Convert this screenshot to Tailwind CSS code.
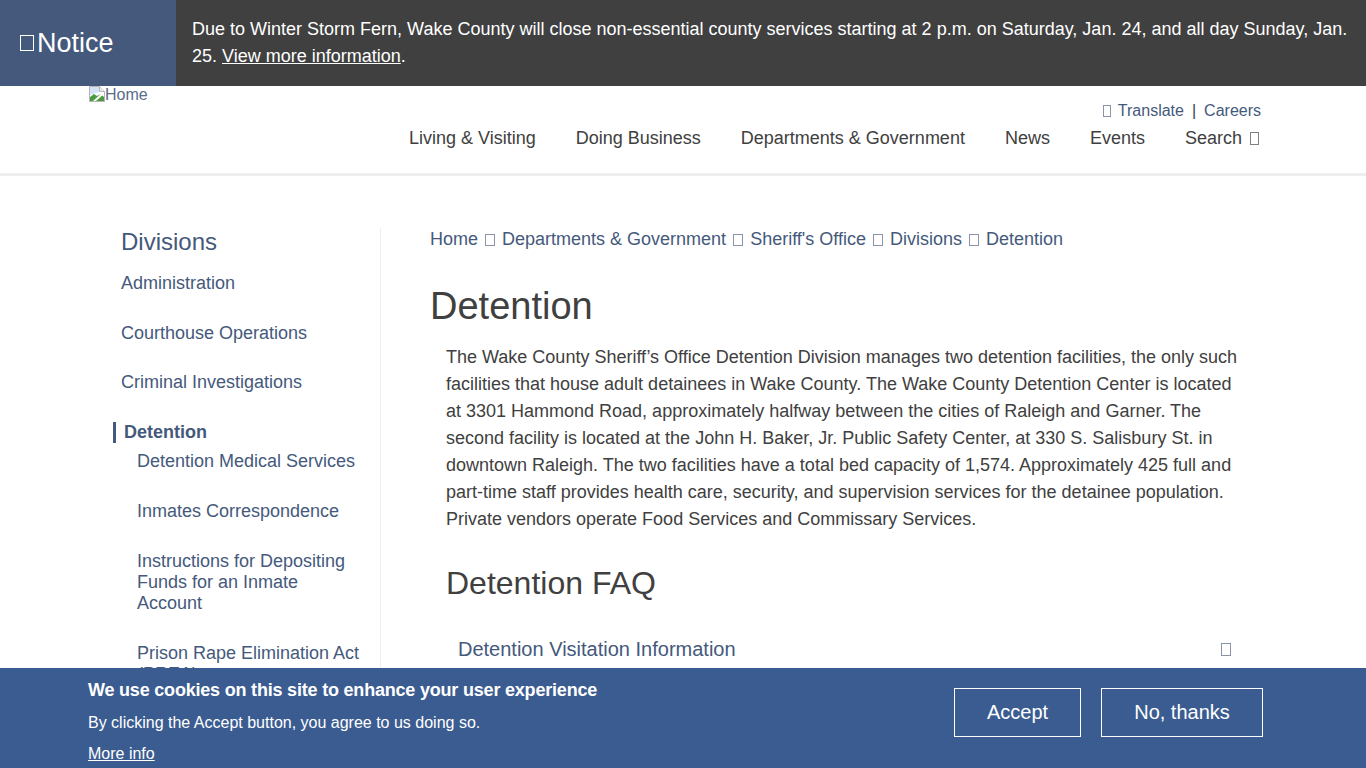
<!DOCTYPE html>
<html lang="en">
<head>
<meta charset="utf-8">
<title>Detention</title>
<script src="https://cdn.jsdelivr.net/npm/@tailwindcss/browser@4"></script>
</head>
<body class="h-[768px] overflow-hidden bg-white font-['Liberation_Sans',Arial,sans-serif] text-[18px] text-[#404040]">
<div class="flex h-[86px]">
  <div class="flex w-[176px] shrink-0 items-center bg-[#44597c] pl-[20px] text-[27px] text-white"><span class="mr-[3px] inline-block h-[16px] w-[14px] border border-white"></span>Notice</div>
  <div class="flex-1 bg-[#404040] pl-[16px] pr-[12px] pt-[16px] leading-[27px] text-white">Due to Winter Storm Fern, Wake County will close non-essential county services starting at 2 p.m. on Saturday, Jan. 24, and all day Sunday, Jan. 25. <a href="#" class="underline">View more information</a>.</div>
</div>
<header class="relative h-[90px] border-b-[3px] border-[#eeeeee]">
  <a href="#" class="absolute left-[89px] top-0 flex items-start text-[16px] leading-[18px] text-[#5a6b88]">
    <svg width="16" height="16" viewBox="0 0 16 16" class="shrink-0"><path d="M.5.5h10l5 5v10H.5z" fill="#fff" stroke="#b5b5b5"/><path d="M10.5.5v5h5" fill="#eee" stroke="#b5b5b5"/><path d="M1 15v-4l4-3 3 2 4-2 3 3v4z" fill="#4c9a3f"/><path d="M1 1h9v5l-9 3z" fill="#d3e2f5"/><path d="M4 15l10-9 1 0v2L7 15z" fill="#fff"/></svg>Home</a>
  <div class="flex flex-col items-end pr-[105px] pt-[15px]">
    <div class="flex h-[20px] items-center text-[16px] text-[#44597c]">
      <span class="mr-[7px] inline-block h-[12px] w-[8px] border border-[#8a94a8]"></span><a href="#">Translate</a><span class="mx-[8px] text-[#404040]">|</span><a href="#">Careers</a>
    </div>
    <nav class="mr-[2px] mt-[4px] flex h-[27px] items-center gap-[40px]">
      <a href="#">Living &amp; Visiting</a><a href="#">Doing Business</a><a href="#">Departments &amp; Government</a><a href="#">News</a><a href="#">Events</a>
      <a href="#" class="flex items-center">Search<span class="ml-[8px] inline-block h-[13px] w-[9px] border border-[#808080]"></span></a>
    </nav>
  </div>
</header>
<div class="flex pl-[113px] pt-[52px]">
  <aside class="h-[500px] w-[268px] shrink-0 border-r border-[#eeeeee] pl-[8px] pr-[15px] text-[#44597c]">
    <h2 class="text-[24px] leading-[28px]">Divisions</h2>
    <ul class="mt-[17px] leading-[21px]">
      <li class="h-[50px]"><a href="#">Administration</a></li>
      <li class="h-[49px]"><a href="#">Courthouse Operations</a></li>
      <li class="h-[50px]"><a href="#">Criminal Investigations</a></li>
      <li class="relative h-[29px] font-bold"><span class="absolute -left-[8px] top-0 h-[21px] w-[3px] bg-[#44597c]"></span><a href="#" class="ml-[3px]">Detention</a></li>
      <li class="ml-[16px] h-[50px]"><a href="#">Detention Medical Services</a></li>
      <li class="ml-[16px] h-[50px]"><a href="#">Inmates Correspondence</a></li>
      <li class="ml-[16px] h-[92px]"><a href="#">Instructions for Depositing Funds for an Inmate Account</a></li>
      <li class="ml-[16px]"><a href="#">Prison Rape Elimination Act (PREA)</a></li>
    </ul>
  </aside>
  <main class="w-[880px] pl-[49px] pt-[1px]">
    <div class="flex h-[21px] items-center text-[#44597c]">
      <a href="#">Home</a><span class="mx-[7px] inline-block h-[12px] w-[10px] border border-[#8a94a8]"></span><a href="#">Departments &amp; Government</a><span class="mx-[7px] inline-block h-[12px] w-[10px] border border-[#8a94a8]"></span><a href="#">Sheriff's Office</a><span class="mx-[7px] inline-block h-[12px] w-[10px] border border-[#8a94a8]"></span><a href="#">Divisions</a><span class="mx-[7px] inline-block h-[12px] w-[10px] border border-[#8a94a8]"></span><a href="#">Detention</a>
    </div>
    <h1 class="mt-[35px] text-[38px] leading-[42px]">Detention</h1>
    <div class="pl-[16px]">
      <p class="mt-[17px] pr-[16px] leading-[27px]">The Wake County Sheriff’s Office Detention Division manages two detention facilities, the only such facilities that house adult detainees in Wake County. The Wake County Detention Center is located at 3301 Hammond Road, approximately halfway between the cities of Raleigh and Garner. The second facility is located at the John H. Baker, Jr. Public Safety Center, at 330 S. Salisbury St. in downtown Raleigh. The two facilities have a total bed capacity of 1,574. Approximately 425 full and part-time staff provides health care, security, and supervision services for the detainee population. Private vendors operate Food Services and Commissary Services.</p>
      <h2 class="mt-[31px] text-[32px] leading-[38px]">Detention FAQ</h2>
      <div class="mt-[35px] flex h-[24px] items-center justify-between pl-[12px] pr-[30px] text-[20px] text-[#44597c]"><a href="#">Detention Visitation Information</a><span class="inline-block h-[13px] w-[10px] border border-[#8a94a8]"></span></div>
    </div>
  </main>
</div>
<div class="fixed inset-x-0 bottom-0 flex h-[100px] justify-between bg-[#3b5c91] pl-[88px] pr-[103px] text-white">
  <div>
    <p class="mt-[12px] text-[18px] font-bold leading-[21px] tracking-[-0.2px]">We use cookies on this site to enhance your user experience</p>
    <p class="mt-[13px] text-[16px] leading-[18px]">By clicking the Accept button, you agree to us doing so.</p>
    <a href="#" class="mt-[13px] block text-[16px] leading-[18px] underline">More info</a>
  </div>
  <div class="mt-[20px] flex h-[49px] gap-[20px] text-[20px]">
    <button class="w-[127px] border border-white pb-[2px]">Accept</button>
    <button class="w-[162px] border border-white pb-[2px]">No, thanks</button>
  </div>
</div>
</body>
</html>
